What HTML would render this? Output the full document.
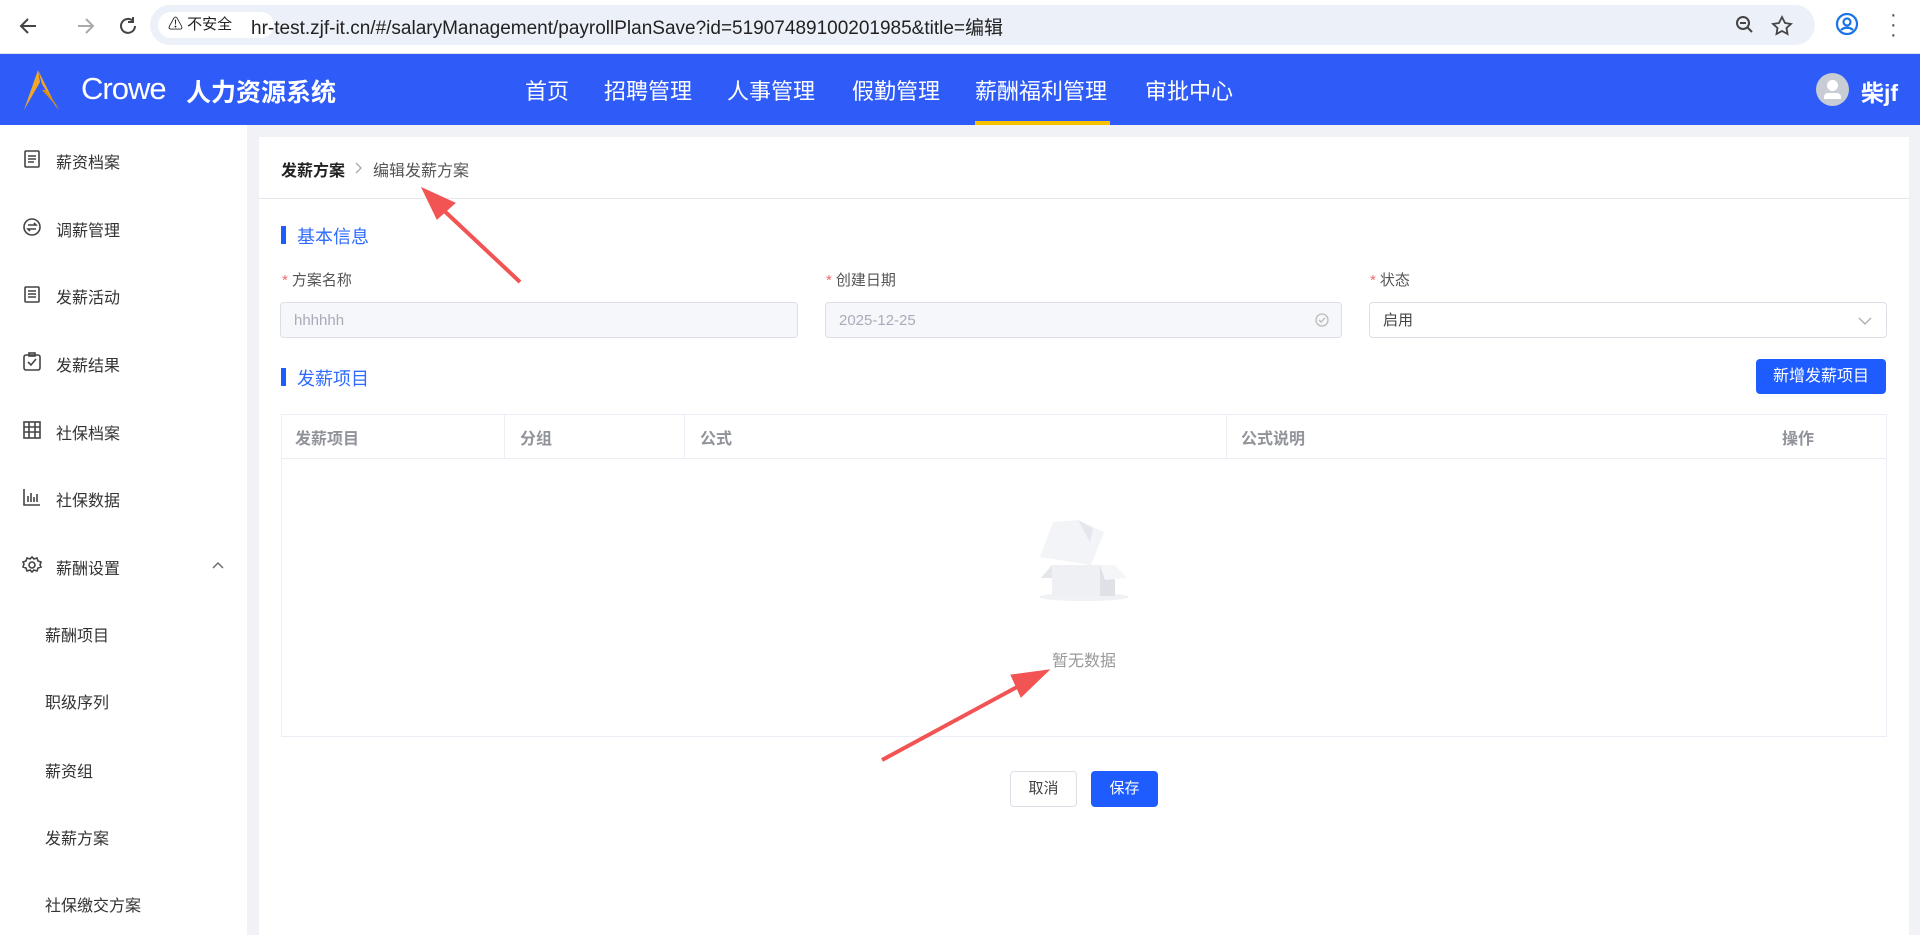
<!DOCTYPE html>
<html><head><meta charset="utf-8"><style>
*{box-sizing:border-box;margin:0;padding:0}
body{width:1920px;height:935px;overflow:hidden;font-family:"Liberation Sans","Noto Sans CJK SC",sans-serif;background:#f0f2f5;position:relative;color:#333}
.a{position:absolute}
.chrome{left:0;top:0;width:1920px;height:54px;background:#fff;border-bottom:1px solid #dde3ee}
.url{left:150px;top:5px;width:1665px;height:40px;border-radius:20px;background:#ecf0f8}
.hdr{left:0;top:54px;width:1920px;height:71px;background:#2f5cf8;color:#fff}
.nav{top:20px;font-size:22px;color:#fff}
.side{left:0;top:125px;width:247px;height:810px;background:#fff}
.si{left:56px;font-size:16px;color:#333}
.sub{left:45px;font-size:16px;color:#333}
.main{left:259px;top:137px;width:1650px;height:798px;background:#fff}
.lbl{font-size:15px;color:#555}
.lbl b{color:#f56c6c;font-weight:normal;margin-right:4px}
.inp{height:36px;border:1px solid #dcdfe6;border-radius:4px;font-size:15px;padding-left:13px;line-height:36px}
.th{top:425px;font-size:16px;color:#909399;font-weight:bold}
</style></head><body>
<div class="a chrome"></div>
<svg class="a" style="left:16px;top:14px" width="130" height="24"><g stroke="#444" stroke-width="2" fill="none"><path d="M20 12H6M12 5l-7 7 7 7"/><path d="M62 12h14M70 5l7 7-7 7" stroke="#aaa"/><path d="M117 7a7 7 0 1 0 2 5M117 3v5h-5"/></g></svg>
<div class="a url"></div>
<div class="a" style="left:158px;top:12px;width:116px;height:26px;background:#fff;border-radius:13px;font-size:15px;line-height:26px;padding-left:10px;color:#222">⚠ 不安全</div>
<div class="a" style="left:251px;top:13px;font-size:19px;color:#222">hr-test.zjf-it.cn/#/salaryManagement/payrollPlanSave?id=51907489100201985&amp;title=编辑</div>
<svg class="a" style="left:1734px;top:14px" width="60" height="24" fill="none" stroke="#444" stroke-width="2"><circle cx="9" cy="9" r="6"/><path d="M13 13l5 5M6 9h6"/><path d="M48 3l3 6 6 1-4.5 4 1 6-5.5-3-5.5 3 1-6-4.5-4 6-1z" stroke-width="1.8"/></svg>
<svg class="a" style="left:1835px;top:12px" width="26" height="26" fill="none" stroke="#1a73e8" stroke-width="2.2"><circle cx="12" cy="12" r="10"/><circle cx="12" cy="10" r="3.5"/><path d="M6 18c3-3 9-3 12 0"/></svg>
<div class="a" style="left:1890px;top:10px;font-size:20px;color:#444;line-height:10px">·<br>·<br>·</div>
<div class="a hdr">
<svg class="a" style="left:22px;top:14px" width="50" height="44"><path d="M16 2 L2 42 L18 14Z" fill="#f3a825"/><path d="M16 2 L36 42 L20 16Z" fill="#f3a825"/><path d="M20 22 L38 42 L24 22Z" fill="#d98d10"/></svg>
<div class="a" style="left:81px;top:17px;font-size:31px;letter-spacing:-1px">Crowe</div>
<div class="a" style="left:186px;top:19px;font-size:25px;font-weight:bold">人力资源系统</div>
<div class="a nav" style="left:525px">首页</div>
<div class="a nav" style="left:604px">招聘管理</div>
<div class="a nav" style="left:727px">人事管理</div>
<div class="a nav" style="left:852px">假勤管理</div>
<div class="a nav" style="left:975px">薪酬福利管理</div>
<div class="a" style="left:975px;top:67px;width:135px;height:4px;background:#f7c100"></div>
<div class="a nav" style="left:1145px">审批中心</div>
<div class="a" style="left:1816px;top:19px;width:33px;height:33px;border-radius:50%;background:#c8ccd4"></div>
<div class="a" style="left:1827px;top:26px;width:11px;height:11px;border-radius:50%;background:#fff"></div>
<div class="a" style="left:1824px;top:39px;width:17px;height:6px;background:#fff;border-radius:4px 4px 0 0"></div>
<div class="a" style="left:1861px;top:20px;font-size:23px;font-weight:bold">柴jf</div>
</div>
<div class="a side"></div>
<svg class="a" style="left:22px;top:150px" width="22" height="760" fill="none" stroke="#444" stroke-width="1.6">
<rect x="3" y="1" width="14" height="16" rx="1"/><path d="M6 6h8M6 9h8M6 12h6"/>
<g transform="translate(0,68)"><circle cx="10" cy="9" r="8"/><path d="M6 7h8l-2-2M14 11H6l2 2"/></g>
<g transform="translate(0,135)"><rect x="3" y="2" width="14" height="15" rx="1"/><path d="M6 6h8M6 9h8M6 12h8"/></g>
<g transform="translate(0,203)"><rect x="2" y="2" width="16" height="15" rx="2"/><path d="M6 9l3 3 5-6"/><rect x="7" y="0" width="6" height="3"/></g>
<g transform="translate(0,271)"><rect x="2" y="1" width="16" height="16"/><path d="M7 1v16M13 1v16M2 6h16M2 11h16"/></g>
<g transform="translate(0,338)"><path d="M2 1v16h16M6 14V8M9 14V5M12 14V9M15 14V6"/></g>
<g transform="translate(0,406)"><circle cx="10" cy="9" r="3"/><path d="M10 1l2 2 3-1 1 3 3 1-1 3 1 2-3 1-1 3-3-1-2 2-2-2-3 1-1-3-3-1 1-3-1-2 3-1 1-3 3 1z"/></g>
</svg>
<div class="a si" style="top:149px">薪资档案</div>
<div class="a si" style="top:217px">调薪管理</div>
<div class="a si" style="top:284px">发薪活动</div>
<div class="a si" style="top:352px">发薪结果</div>
<div class="a si" style="top:420px">社保档案</div>
<div class="a si" style="top:487px">社保数据</div>
<div class="a si" style="top:555px">薪酬设置</div>
<svg class="a" style="left:211px;top:561px" width="14" height="10" fill="none" stroke="#666" stroke-width="1.4"><path d="M2 7l5-5 5 5"/></svg>
<div class="a sub" style="top:622px">薪酬项目</div>
<div class="a sub" style="top:689px">职级序列</div>
<div class="a sub" style="top:758px">薪资组</div>
<div class="a sub" style="top:825px">发薪方案</div>
<div class="a sub" style="top:892px">社保缴交方案</div>
<div class="a main"></div>
<div class="a" style="left:281px;top:157px;font-size:16px;font-weight:bold;color:#222">发薪方案</div>
<svg class="a" style="left:354px;top:161px" width="10" height="14" fill="none" stroke="#aaa" stroke-width="1.4"><path d="M2 2l5 5-5 5"/></svg>
<div class="a" style="left:373px;top:157px;font-size:16px;color:#555">编辑发薪方案</div>
<div class="a" style="left:259px;top:198px;width:1650px;height:1px;background:#e6e8ee"></div>
<div class="a" style="left:281px;top:226px;width:5px;height:18px;background:#1f5cff"></div>
<div class="a" style="left:297px;top:223px;font-size:18px;color:#2f6bff">基本信息</div>
<div class="a lbl" style="left:282px;top:269px"><b>*</b>方案名称</div>
<div class="a lbl" style="left:826px;top:269px"><b>*</b>创建日期</div>
<div class="a lbl" style="left:1370px;top:269px"><b>*</b>状态</div>
<div class="a inp" style="left:280px;top:302px;width:518px;background:#f5f7fa;color:#aab">hhhhhh</div>
<div class="a inp" style="left:825px;top:302px;width:517px;background:#f5f7fa;color:#aab">2025-12-25<svg style="position:absolute;right:12px;top:10px" width="14" height="14" fill="none" stroke="#bbb" stroke-width="1.3"><circle cx="7" cy="7" r="6"/><path d="M4 7l2 2 4-4"/></svg></div>
<div class="a inp" style="left:1369px;top:302px;width:518px;color:#444">启用<svg style="position:absolute;right:14px;top:14px" width="14" height="8" fill="none" stroke="#aaa" stroke-width="1.3"><path d="M1 1l6 6 6-6"/></svg></div>
<div class="a" style="left:281px;top:368px;width:5px;height:18px;background:#1f5cff"></div>
<div class="a" style="left:297px;top:365px;font-size:18px;color:#2f6bff">发薪项目</div>
<div class="a" style="left:1756px;top:359px;width:130px;height:35px;background:#1f5cff;border-radius:4px;color:#fff;font-size:16px;line-height:35px;text-align:center">新增发薪项目</div>
<div class="a" style="left:281px;top:414px;width:1606px;height:323px;border:1px solid #ebeef5"></div>
<div class="a" style="left:281px;top:458px;width:1606px;height:1px;background:#ebeef5"></div>
<div class="a" style="left:504px;top:414px;width:1px;height:44px;background:#ebeef5"></div>
<div class="a" style="left:684px;top:414px;width:1px;height:44px;background:#ebeef5"></div>
<div class="a" style="left:1226px;top:414px;width:1px;height:44px;background:#ebeef5"></div>
<div class="a th" style="left:295px">发薪项目</div>
<div class="a th" style="left:520px">分组</div>
<div class="a th" style="left:700px">公式</div>
<div class="a th" style="left:1241px">公式说明</div>
<div class="a th" style="left:1782px">操作</div>
<svg class="a" style="left:1038px;top:510px" width="92" height="95">
<ellipse cx="46" cy="87" rx="45" ry="4" fill="#f0f1f4"/>
<path d="M14 55H62V86H14Z" fill="#eef0f4"/><path d="M62 55H77V86H62Z" fill="#dfe1e7"/>
<path d="M15 12L40 10 66 22 53 55 2 47Z" fill="#f3f4f7"/><path d="M40 10L55 18 52 32Z" fill="#e6e7ec"/>
<path d="M62 55L67 70 89 68 77 55Z" fill="#f5f6f8"/><path d="M14 55L3 68 14 68Z" fill="#e5e6ea"/>
</svg>
<div class="a" style="left:1052px;top:647px;font-size:16px;color:#999">暂无数据</div>
<div class="a" style="left:1010px;top:771px;width:67px;height:36px;border:1px solid #dcdfe6;border-radius:4px;font-size:15px;line-height:34px;text-align:center;color:#444">取消</div>
<div class="a" style="left:1091px;top:771px;width:67px;height:36px;background:#1f5cff;border-radius:4px;font-size:15px;line-height:36px;text-align:center;color:#fff">保存</div>
<svg class="a" style="left:0;top:0" width="1920" height="935">
<g fill="#f25454" stroke="#f25454">
<path d="M520 282L438 205" stroke-width="4"/><path d="M422 188L455 203 437 219Z"/>
<path d="M882 760L1030 680" stroke-width="4"/><path d="M1049 670L1021 697 1011 675Z"/>
</g></svg>
</body></html>
